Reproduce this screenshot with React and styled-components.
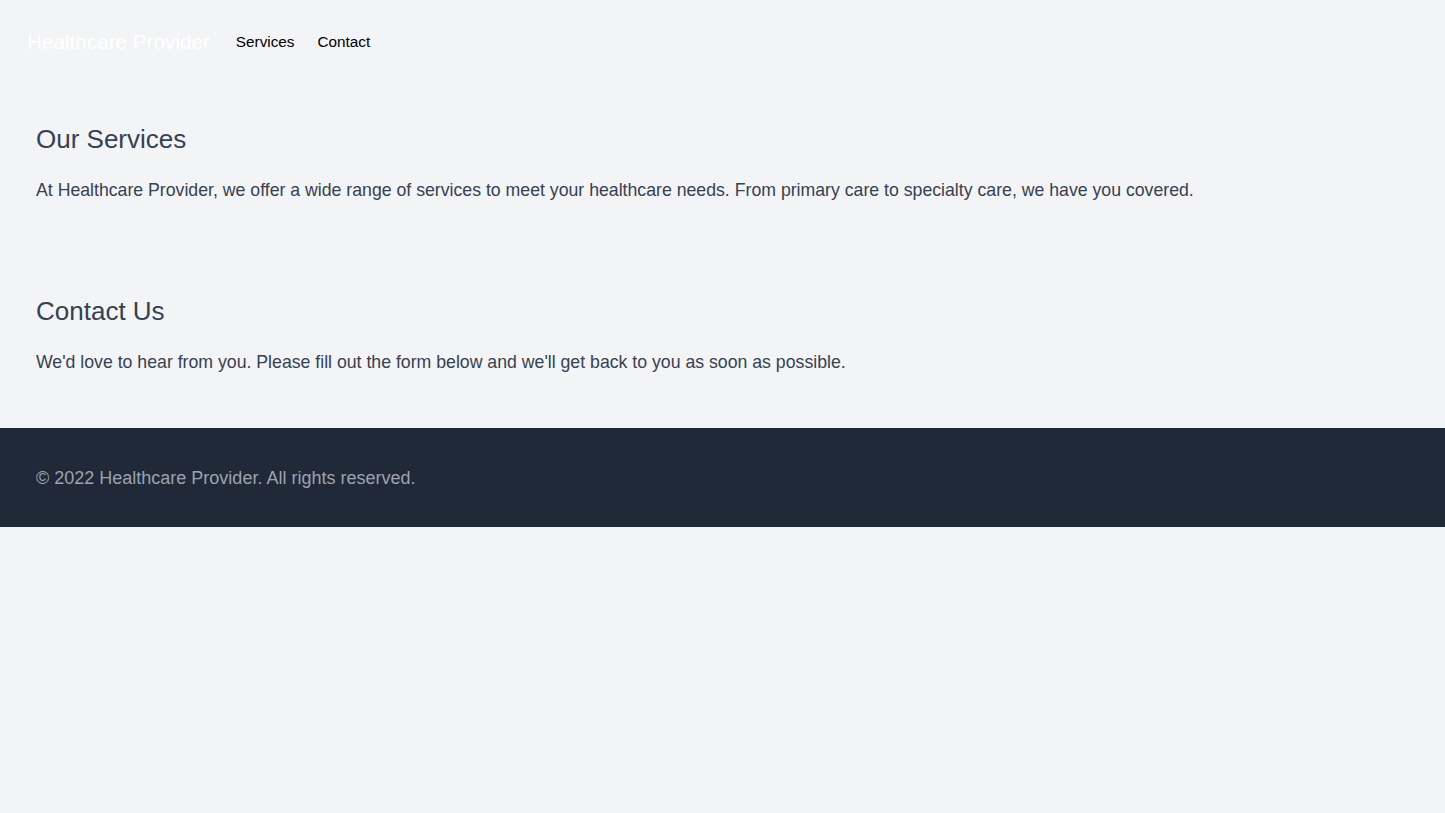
import React from 'react';
import styled, { createGlobalStyle } from 'styled-components';

const GlobalStyle = createGlobalStyle`
	html, body {
		margin: 0;
		padding: 0;
		background-color: #f3f4f6;
		font-family: "Liberation Sans", Arial, sans-serif;
	}
	body {
		min-height: 813px;
	}
`;

const Nav = styled.nav`
	display: flex;
	align-items: center;
	height: 84px;
	padding: 0 27px;
	box-sizing: border-box;
`;

const Brand = styled.a`
	font-size: 20.7px;
	line-height: 28px;
	color: #ffffff;
	text-decoration: none;
	margin-right: 26px;
`;

const NavLink = styled.a`
	font-size: 15.3px;
	line-height: 24px;
	color: #000000;
	text-decoration: none;
	margin-right: 23px;
`;

const Section = styled.section`
	padding: 39px 36px 52px;
`;

const Heading = styled.h2`
	margin: 0 0 21px;
	font-size: 26px;
	line-height: 32px;
	font-weight: 400;
	color: #374151;
`;

const Text = styled.p`
	margin: 0;
	font-size: 17.7px;
	line-height: 28px;
	color: #374151;
`;

const Footer = styled.footer`
	background-color: #1f2937;
	padding: 36px 36px 35px;
`;

const FooterText = styled.p`
	margin: 0;
	font-size: 18px;
	line-height: 28px;
	color: #9ca3af;
`;

const sections = [
	{
		id: 'services',
		title: 'Our Services',
		text: 'At Healthcare Provider, we offer a wide range of services to meet your healthcare needs. From primary care to specialty care, we have you covered.',
	},
	{
		id: 'contact',
		title: 'Contact Us',
		text: "We'd love to hear from you. Please fill out the form below and we'll get back to you as soon as possible.",
	},
];

export default function App() {
	return (
		<React.Fragment>
			<GlobalStyle />
			<Nav>
				<Brand href="#">Healthcare Provider</Brand>
				<NavLink href="#services">Services</NavLink>
				<NavLink href="#contact">Contact</NavLink>
			</Nav>
			{sections.map(section => (
				<Section key={section.id} id={section.id}>
					<Heading>{section.title}</Heading>
					<Text>{section.text}</Text>
				</Section>
			))}
			<Footer>
				<FooterText>© 2022 Healthcare Provider. All rights reserved.</FooterText>
			</Footer>
		</React.Fragment>
	);
}
